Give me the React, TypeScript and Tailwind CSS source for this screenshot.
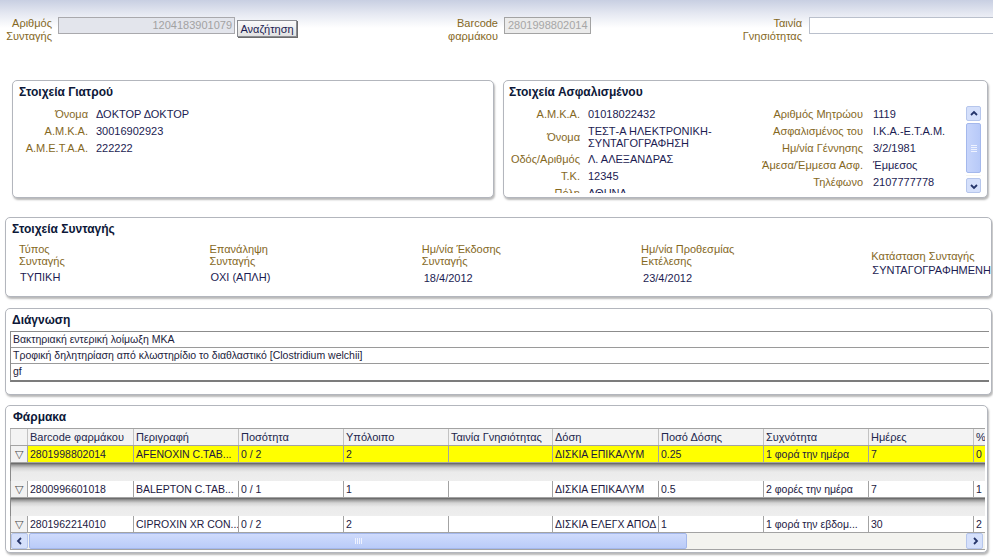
import React from 'react';

const LABEL = 'text-[#85681e]';
const VALUE = 'text-[#1c1c52]';
const TITLE = 'font-bold text-[12px] leading-[14px] text-[#0d1838]';
const PANEL = 'bg-white border border-[#b3b6bd] rounded-[5px] shadow-[1px_2px_2px_rgba(0,0,0,0.28)]';

const drugCols = [
  { name: 'Barcode φαρμάκου', w: 'w-[106px]' },
  { name: 'Περιγραφή', w: 'w-[105px]' },
  { name: 'Ποσότητα', w: 'w-[105px]' },
  { name: 'Υπόλοιπο', w: 'w-[105px]' },
  { name: 'Ταινία Γνησιότητας', w: 'w-[104px]' },
  { name: 'Δόση', w: 'w-[106px]' },
  { name: 'Ποσό Δόσης', w: 'w-[105px]' },
  { name: 'Συχνότητα', w: 'w-[105px]' },
  { name: 'Ημέρες', w: 'w-[105px]' },
  { name: '%', w: 'w-[30px]' },
];

const drugs = [
  ['2801998802014', 'AFENOXIN C.TAB...', '0 / 2', '2', '', 'ΔΙΣΚΙΑ ΕΠΙΚΑΛΥΜ', '0.25', '1 φορά την ημέρα', '7', '0'],
  ['2800996601018', 'BALEPTON C.TAB...', '0 / 1', '1', '', 'ΔΙΣΚΙΑ ΕΠΙΚΑΛΥΜ', '0.5', '2 φορές την ημέρα', '7', '1'],
  ['2801962214010', 'CIPROXIN XR CON...', '0 / 2', '2', '', 'ΔΙΣΚΙΑ ΕΛΕΓΧ ΑΠΟΔ', '1', '1 φορά την εβδομ...', '30', '2'],
];

const Chevron: React.FC<{ dir: 'up' | 'down' | 'left' | 'right' }> = ({ dir }) => {
  const d = {
    up: 'M2 6 L5 3 L8 6',
    down: 'M2 4 L5 7 L8 4',
    left: 'M6 2 L3 5 L6 8',
    right: 'M4 2 L7 5 L4 8',
  }[dir];
  return (
    <svg width="10" height="10" viewBox="0 0 10 10">
      <path d={d} fill="none" stroke="#25356a" strokeWidth="1.8" />
    </svg>
  );
};

const DetailGap: React.FC = () => (
  <div className="h-[18px] border-l border-[#8a8a8a] bg-[linear-gradient(to_bottom,#5e5e5e_0px,#9a9a9a_2px,#d4d4d4_5px,#ebebeb_9px,#eeeeee_100%)]" />
);

const DrugRow: React.FC<{ row: string[]; hi?: boolean }> = ({ row, hi }) => (
  <div className="flex h-[17px] border-b border-[#a3a3a3]">
    <div className="w-[18px] shrink-0 bg-[#f2f2f2] border-l border-r border-[#a3a3a3] flex items-center justify-center text-[11px] text-[#444] leading-none">▽</div>
    {row.map((c, i) => (
      <div
        key={i}
        className={`${drugCols[i].w} shrink-0 px-[2px] border-r border-[#a3a3a3] text-[10.5px] leading-[16px] whitespace-nowrap overflow-hidden text-[#22193f] ${hi ? 'bg-[#ffff00]' : 'bg-white'}`}
      >
        {c}
      </div>
    ))}
  </div>
);

export default function App() {
  return (
    <div className="w-[993px] h-[557px] overflow-hidden bg-white font-['Liberation_Sans',Arial,sans-serif] text-[11px]">
      {/* Search header */}
      <div className="h-[80px] bg-[linear-gradient(to_bottom,#c8cfe2_0px,#e6e9f2_14px,#ffffff_28px)] flex items-start pt-[17px] leading-[13px]">
        <div className={`w-[52px] shrink-0 text-right ${LABEL}`}>Αριθμός<br />Συνταγής</div>
        <div className="ml-[6px] w-[177px] shrink-0 h-[17px] bg-[#e3e5ec] border border-[#a9a9ad] text-right pr-[2px] text-[#a2a2a2] leading-[15px]">1204183901079</div>
        <button className="ml-[2px] mt-[3px] w-[60px] shrink-0 h-[17px] border border-[#8a8c92] bg-[linear-gradient(to_bottom,#fafafa,#e2e2e2)] text-[#1c1c52] text-[11px] leading-[14px] shadow-[1px_1px_0_#6c6c6c]">Αναζήτηση</button>
        <div className={`w-[201px] shrink-0 text-right ${LABEL}`}>Barcode<br />φαρμάκου</div>
        <div className="ml-[6px] w-[87px] shrink-0 h-[17px] bg-[#ebebeb] border border-[#a3a3a3] pl-[3px] text-[#a6a6a6] leading-[15px]">2801998802014</div>
        <div className={`w-[211px] shrink-0 text-right ${LABEL}`}>Ταινία<br />Γνησιότητας</div>
        <div className="ml-[7px] w-[200px] shrink-0 h-[17px] bg-white border border-[#bac0cc]" />
      </div>

      {/* Doctor / insured */}
      <div className="flex pl-[12px] gap-[9px]">
        <div className={`${PANEL} w-[482px] h-[118px] px-[6px] pt-[4px]`}>
          <div className={TITLE}>Στοιχεία Γιατρού</div>
          <div className="grid grid-cols-[69px_1fr] gap-x-[8px] mt-[7px] leading-[17px]">
            <span className={`text-right ${LABEL}`}>Όνομα</span><span className={VALUE}>ΔΟΚΤΟΡ ΔΟΚΤΟΡ</span>
            <span className={`text-right ${LABEL}`}>Α.Μ.Κ.Α.</span><span className={VALUE}>30016902923</span>
            <span className={`text-right ${LABEL}`}>Α.Μ.Ε.Τ.Α.Α.</span><span className={VALUE}>222222</span>
          </div>
        </div>

        <div className={`${PANEL} w-[485px] h-[118px] pl-[5px] pt-[4px]`}>
          <div className={TITLE}>Στοιχεία Ασφαλισμένου</div>
          <div className="flex mt-[7px] h-[87px] overflow-hidden">
            <div className="grid grid-cols-[71px_163px] gap-x-[8px] leading-[17px] content-start">
              <span className={`text-right ${LABEL}`}>Α.Μ.Κ.Α.</span><span className={VALUE}>01018022432</span>
              <span className={`text-right ${LABEL} self-center`}>Όνομα</span>
              <span className={`${VALUE} leading-[12px] py-[2px]`}>ΤΕΣΤ-Α ΗΛΕΚΤΡΟΝΙΚΗ-<br />ΣΥΝΤΑΓΟΓΡΑΦΗΣΗ</span>
              <span className={`text-right ${LABEL}`}>Οδός/Αριθμός</span><span className={VALUE}>Λ. ΑΛΕΞΑΝΔΡΑΣ</span>
              <span className={`text-right ${LABEL}`}>Τ.Κ.</span><span className={VALUE}>12345</span>
              <span className={`text-right ${LABEL}`}>Πόλη</span><span className={VALUE}>ΑΘΗΝΑ</span>
            </div>
            <div className="grid grid-cols-[112px_85px] gap-x-[10px] leading-[17px] content-start">
              <span className={`text-right ${LABEL}`}>Αριθμός Μητρώου</span><span className={VALUE}>1119</span>
              <span className={`text-right ${LABEL}`}>Ασφαλισμένος του</span><span className={VALUE}>Ι.Κ.Α.-Ε.Τ.Α.Μ.</span>
              <span className={`text-right ${LABEL}`}>Ημ/νία Γέννησης</span><span className={VALUE}>3/2/1981</span>
              <span className={`text-right ${LABEL}`}>Άμεσα/Έμμεσα Ασφ.</span><span className={VALUE}>Έμμεσος</span>
              <span className={`text-right ${LABEL}`}>Τηλέφωνο</span><span className={VALUE}>2107777778</span>
            </div>
            <div className="ml-[8px] w-[15px] h-[87px] shrink-0 flex flex-col gap-[2px]">
              <div className="h-[15px] rounded-[2px] border border-[#b6c6ec] bg-[#d5e0fb] flex items-center justify-center"><Chevron dir="up" /></div>
              <div className="h-[50px] rounded-[2px] border border-[#a4b8ec] bg-[linear-gradient(to_right,#c7d5fb,#b7c9f8)] flex flex-col items-center justify-center gap-[1px]">
                <div className="w-[6px] h-px bg-[#eef2ff]" />
                <div className="w-[6px] h-px bg-[#eef2ff]" />
                <div className="w-[6px] h-px bg-[#eef2ff]" />
                <div className="w-[6px] h-px bg-[#eef2ff]" />
              </div>
              <div className="flex-1 bg-[#f4f4f0]" />
              <div className="h-[15px] rounded-[2px] border border-[#b6c6ec] bg-[#d5e0fb] flex items-center justify-center"><Chevron dir="down" /></div>
            </div>
          </div>
        </div>
      </div>

      {/* Prescription */}
      <div className={`${PANEL} ml-[5px] mt-[19px] w-[987px] h-[80px] pt-[4px] pl-[6px]`}>
        <div className={TITLE}>Στοιχεία Συνταγής</div>
        <div className="flex pl-[7px] mt-[7px] leading-[12px]">
          <div className="w-[191px]">
            <div className={LABEL}>Τύπος<br />Συνταγής</div>
            <div className={`${VALUE} mt-[4px] ml-px`}>ΤΥΠΙΚΗ</div>
          </div>
          <div className="w-[213px]">
            <div className={LABEL}>Επανάληψη<br />Συνταγής</div>
            <div className={`${VALUE} mt-[4px] ml-px`}>ΟΧΙ (ΑΠΛΗ)</div>
          </div>
          <div className="w-[220px]">
            <div className={LABEL}>Ημ/νία Έκδοσης<br />Συνταγής</div>
            <div className={`${VALUE} mt-[5px] ml-[2px]`}>18/4/2012</div>
          </div>
          <div className="w-[231px]">
            <div className={LABEL}>Ημ/νία Προθεσμίας<br />Εκτέλεσης</div>
            <div className={`${VALUE} mt-[5px] ml-[2px]`}>23/4/2012</div>
          </div>
          <div className="pt-[6px] leading-[14px]">
            <div className={LABEL}>Κατάσταση Συνταγής</div>
            <div className={`${VALUE} ml-[1px]`}>ΣΥΝΤΑΓΟΓΡΑΦΗΜΕΝΗ</div>
          </div>
        </div>
      </div>

      {/* Diagnosis */}
      <div className={`${PANEL} ml-[5px] mt-[11px] w-[987px] h-[87px] pt-[4px] pl-[4px] pr-[2px]`}>
        <div className={`${TITLE} pl-[2px]`}>Διάγνωση</div>
        <div className="mt-[4px] border-l border-t border-[#8c8c8c] border-b-2 border-b-[#7c7c7c] text-[10.5px] text-[#1c1c3c]">
          <div className="h-[16px] border-b border-[#9a9a9a] pl-[2px] leading-[15px]">Βακτηριακή εντερική λοίμωξη ΜΚΑ</div>
          <div className="h-[16px] border-b border-[#9a9a9a] pl-[2px] leading-[15px]">Τροφική δηλητηρίαση από κλωστηρίδιο το διαθλαστικό [Clostridium welchii]</div>
          <div className="h-[16px] pl-[2px] leading-[15px]">gf</div>
        </div>
      </div>

      {/* Drugs */}
      <div className={`${PANEL} ml-[5px] mt-[10px] w-[983px] h-[148px] pt-[4px] pl-[4px]`}>
        <div className={`${TITLE} pl-[3px]`}>Φάρμακα</div>
        <div className="mt-[4px] w-[975px] overflow-hidden border-t border-[#a3a3a3]">
          <div className="flex h-[17px] border-b border-[#a3a3a3] bg-[#f3f3f3]">
            <div className="w-[18px] shrink-0 border-l border-r border-[#c2c2c2]" />
            {drugCols.map((c) => (
              <div key={c.name} className={`${c.w} shrink-0 px-[2px] border-r border-[#c2c2c2] text-[11px] leading-[16px] whitespace-nowrap overflow-hidden text-[#22264c]`}>
                {c.name}
              </div>
            ))}
          </div>
          <DrugRow row={drugs[0]} hi />
          <DetailGap />
          <DrugRow row={drugs[1]} />
          <DetailGap />
          <DrugRow row={drugs[2]} />
          <div className="flex h-[17px] border-l border-b border-[#a3a3a3] bg-[#f3f3ef]">
            <div className="w-[17px] h-[16px] rounded-[2px] border border-[#b6c6ec] bg-[#d5e0fb] flex items-center justify-center"><Chevron dir="left" /></div>
            <div className="w-[658px] h-[16px] ml-px rounded-[2px] border border-[#a4b8ec] bg-[linear-gradient(to_bottom,#cfdbfc,#b9cbf8)] flex items-center justify-center gap-[1px]">
              <div className="w-px h-[6px] bg-[#eef2ff]" />
              <div className="w-px h-[6px] bg-[#eef2ff]" />
              <div className="w-px h-[6px] bg-[#eef2ff]" />
              <div className="w-px h-[6px] bg-[#eef2ff]" />
            </div>
            <div className="flex-1" />
            <div className="w-[17px] h-[16px] mr-[2px] rounded-[2px] border border-[#b6c6ec] bg-[#d5e0fb] flex items-center justify-center"><Chevron dir="right" /></div>
          </div>
        </div>
      </div>
    </div>
  );
}
